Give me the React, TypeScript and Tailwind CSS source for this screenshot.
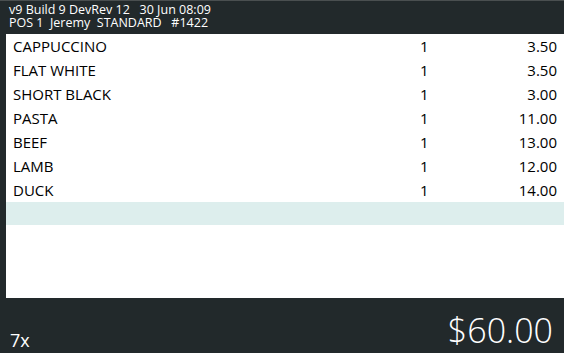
import React from "react";

const items = [
  ["CAPPUCCINO", "1", "3.50"],
  ["FLAT WHITE", "1", "3.50"],
  ["SHORT BLACK", "1", "3.00"],
  ["PASTA", "1", "11.00"],
  ["BEEF", "1", "13.00"],
  ["LAMB", "1", "12.00"],
  ["DUCK", "1", "14.00"],
];

export default function App() {
  return (
    <div
      className="w-[564px] h-[353px] bg-[#22292b] flex flex-col overflow-hidden border-t border-[#4a4f50]"
      style={{ fontFamily: '"Open Sans", "Noto Sans", sans-serif' }}
    >
      <div className="h-[33px] pl-[9px] pt-[2px] text-white text-[12.5px] leading-[13px] flex flex-col gap-0">
        <div className="whitespace-pre h-[13px]">v9 Build 9 DevRev 12   30 Jun 08:09</div>
        <div className="whitespace-pre h-[13px]">POS 1  Jeremy  STANDARD   #1422</div>
      </div>
      <div className="ml-[6px] h-[264px] bg-white flex flex-col">
        {items.map(([name, qty, price]) => (
          <div key={name} className="h-[24px] flex items-center text-[15px] text-black">
            <div className="pl-[7px] w-[414px]">{name}</div>
            <div className="w-[40px]">{qty}</div>
            <div className="flex-1 text-right pr-[7px]">{price}</div>
          </div>
        ))}
        <div className="h-[23px] bg-[#ddeeed]" />
      </div>
      <div className="flex-1 flex items-end justify-between pl-[10px] pr-[11px] text-white">
        <div className="text-[18px] leading-[24px] mb-[1px]">7x</div>
        <div className="text-[34px] leading-[42px] font-light mb-[2px]">$60.00</div>
      </div>
    </div>
  );
}
